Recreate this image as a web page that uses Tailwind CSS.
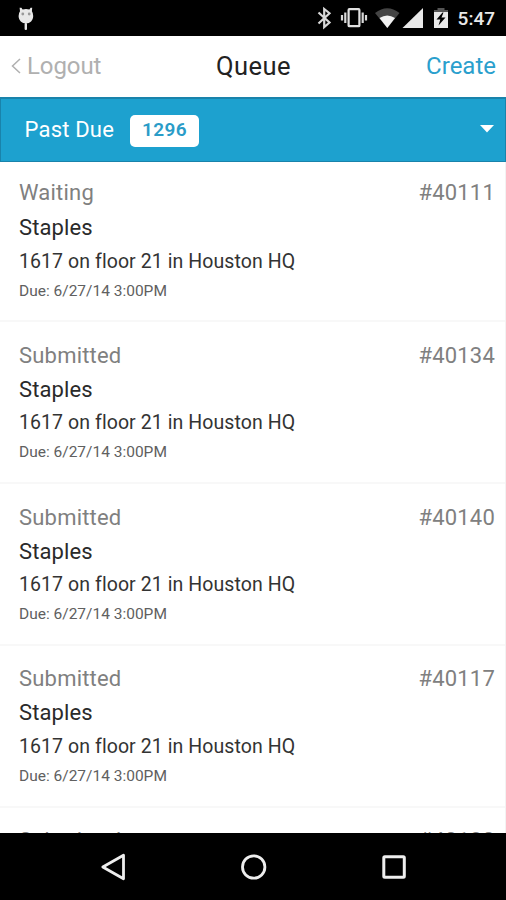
<!DOCTYPE html>
<html lang="en">
<head>
  <meta charset="UTF-8" />
  <meta name="viewport" content="width=device-width, initial-scale=1" />
  <title>Queue</title>
  <script src="https://cdn.jsdelivr.net/npm/@tailwindcss/browser@4"></script>
</head>
<body class="bg-white font-[Roboto,sans-serif]">
  <div class="w-[506px] h-[900px] flex flex-col overflow-hidden">

    <!-- Status bar -->
    <div class="h-[35.5px] shrink-0 bg-black flex items-start justify-between pl-[17px] pr-[11px] text-[#e8e8e8]">
      <svg class="w-[18px] h-[24px] mt-[7px]" viewBox="0 0 18 24" fill="currentColor">
        <path d="M2.6 0.8 4.4 0.8 5.6 2.6Q9 1.2 12.4 2.6L13.6 0.8 15.2 0.8 14.9 4.2Q16.2 6 16.2 9C16.2 13.5 13 16.5 9 16.5S1.6 13.5 1.6 9Q1.6 6 3 4.2Z" />
        <rect x="7.6" y="16" width="2.4" height="7" rx="1" />
        <circle cx="5.8" cy="7" r="1.4" fill="#999" />
        <circle cx="12.2" cy="7" r="1.4" fill="#999" />
      </svg>
      <div class="flex">
        <svg class="w-[142px] h-[35px]" viewBox="312 0 142 35" fill="none">
          <!-- bluetooth -->
          <path d="M317.5 12.5 328.5 22.5 323.2 27V9L328.5 13.2 317.5 23.5" stroke="#d8d8d8" stroke-width="2.2" />
          <!-- vibrate -->
          <rect x="347.6" y="9.2" width="10.8" height="17" rx="0.8" stroke="#e0e0e0" stroke-width="2.2" />
          <path d="M344.3 12.5V23M361.7 12.5V23M341 15V20.5M365 15V20.5" stroke="#d8d8d8" stroke-width="2.2" />
          <!-- wifi -->
          <path d="M374 13Q386.3 3.5 398.5 13L386.3 28Z" fill="#444" />
          <path d="M378.5 18Q386.3 13 394 18L386.3 28Z" fill="#f2f2f2" />
          <!-- signal -->
          <path d="M422 8V28H401.5Z" fill="#e8e8e8" />
          <!-- battery -->
          <path d="M436.5 8H443.5V10H447V14H433V10H436.5Z" fill="#555" />
          <path d="M433 12H447V28H433Z" fill="#e8e8e8" />
          <path d="M441.5 12.5 435.5 19.5H439.3L437.5 25.5 444.5 17.5H440.5L442.5 12.5Z" fill="#000" />
        </svg>
        <span class="ml-[3px] mt-[5px] text-[19px] leading-[28px] font-medium">5:47</span>
      </div>
    </div>

    <!-- Title bar -->
    <div class="h-[61.5px] shrink-0 grid grid-cols-3 items-center pl-[11px] pr-[10px]">
      <div class="flex items-center gap-[6px] text-[#b0b0b0] text-[24px]">
        <svg class="w-[10px] h-[16px]" viewBox="0 0 10 16" fill="none" stroke="currentColor" stroke-width="1.5">
          <path d="M9 1 1.5 8 9 15" />
        </svg>
        <span class="tracking-[-0.1px]">Logout</span>
      </div>
      <h1 class="text-center text-[25.5px] text-[#222] tracking-[0.5px]">Queue</h1>
      <div class="text-right text-[24px] text-[#2a9fcd]">Create</div>
    </div>

    <!-- Filter dropdown -->
    <div class="h-[65px] shrink-0 bg-[#1da1cf] border border-t-2 border-[#1983ab] flex items-center pl-[23.5px] pr-[11px] pb-[2px] text-white">
      <span class="text-[22px] tracking-[0.2px]">Past Due</span>
      <span class="ml-[16px] mt-[3px] w-[69px] h-[32px] rounded-[5px] bg-white text-[#2a9cc8] text-[19px] font-semibold flex items-center justify-center tracking-[0.4px]">1296</span>
      <svg class="ml-auto w-[14px] h-[8px]" viewBox="0 0 14 8" fill="currentColor"><path d="M0 0H14L7 7.5Z" /></svg>
    </div>

    <!-- Ticket list -->
    <div class="flex-1 min-h-0 overflow-hidden border-r border-[#f3f3f3]">
      <div class="h-[160px] border-b-2 border-[#f8f8f8] pl-[19px] pr-[10px] pt-[16px]">
        <div class="flex justify-between text-[22px] leading-[30px] text-[#808080] tracking-[0.2px]">
          <span>Waiting</span>
          <span>#40111</span>
        </div>
        <div class="mt-[5px] text-[22px] leading-[30px] text-[#2a2a2a] tracking-[0.1px]">Staples</div>
        <div class="mt-[5px] text-[19.5px] leading-[28px] text-[#333] tracking-[0.08px]">1617 on floor 21 in Houston HQ</div>
        <div class="mt-[4px] text-[15.5px] leading-[22px] text-[#606060]">Due: 6/27/14 3:00PM</div>
      </div>
      <div class="h-[162px] border-b-2 border-[#f8f8f8] pl-[19px] pr-[10px] pt-[19px]">
        <div class="flex justify-between text-[22px] leading-[30px] text-[#808080] tracking-[0.2px]">
          <span>Submitted</span>
          <span>#40134</span>
        </div>
        <div class="mt-[4px] text-[22px] leading-[30px] text-[#2a2a2a] tracking-[0.1px]">Staples</div>
        <div class="mt-[4px] text-[19.5px] leading-[28px] text-[#333] tracking-[0.08px]">1617 on floor 21 in Houston HQ</div>
        <div class="mt-[4px] text-[15.5px] leading-[22px] text-[#606060]">Due: 6/27/14 3:00PM</div>
      </div>
      <div class="h-[162px] border-b-2 border-[#f8f8f8] pl-[19px] pr-[10px] pt-[19px]">
        <div class="flex justify-between text-[22px] leading-[30px] text-[#808080] tracking-[0.2px]">
          <span>Submitted</span>
          <span>#40140</span>
        </div>
        <div class="mt-[4px] text-[22px] leading-[30px] text-[#2a2a2a] tracking-[0.1px]">Staples</div>
        <div class="mt-[4px] text-[19.5px] leading-[28px] text-[#333] tracking-[0.08px]">1617 on floor 21 in Houston HQ</div>
        <div class="mt-[4px] text-[15.5px] leading-[22px] text-[#606060]">Due: 6/27/14 3:00PM</div>
      </div>
      <div class="h-[162px] border-b-2 border-[#f8f8f8] pl-[19px] pr-[10px] pt-[18px]">
        <div class="flex justify-between text-[22px] leading-[30px] text-[#808080] tracking-[0.2px]">
          <span>Submitted</span>
          <span>#40117</span>
        </div>
        <div class="mt-[4px] text-[22px] leading-[30px] text-[#2a2a2a] tracking-[0.1px]">Staples</div>
        <div class="mt-[5px] text-[19.5px] leading-[28px] text-[#333] tracking-[0.08px]">1617 on floor 21 in Houston HQ</div>
        <div class="mt-[4px] text-[15.5px] leading-[22px] text-[#606060]">Due: 6/27/14 3:00PM</div>
      </div>
      <div class="h-[162px] pl-[19px] pr-[10px] pt-[18px]">
        <div class="flex justify-between text-[22px] leading-[30px] text-[#808080] tracking-[0.2px]">
          <span>Submitted</span>
          <span>#40120</span>
        </div>
      </div>
    </div>

    <!-- Navigation bar -->
    <div class="h-[67px] shrink-0 bg-black flex items-center justify-between pl-[100px] pr-[99px]">
      <svg class="w-[26px] h-[28px]" viewBox="0 0 26 28" fill="none" stroke="#eee" stroke-width="2.8" stroke-linejoin="round">
        <path d="M23.5 2.2V25.8L2.8 14Z" />
      </svg>
      <svg class="w-[28px] h-[28px]" viewBox="0 0 28 28" fill="none" stroke="#eee" stroke-width="2.8">
        <circle cx="13.7" cy="14" r="11.2" />
      </svg>
      <svg class="w-[26px] h-[26px]" viewBox="0 0 26 26" fill="none" stroke="#eee" stroke-width="3">
        <rect x="2.8" y="2.7" width="20.5" height="20.5" rx="1" />
      </svg>
    </div>

  </div>
</body>
</html>
